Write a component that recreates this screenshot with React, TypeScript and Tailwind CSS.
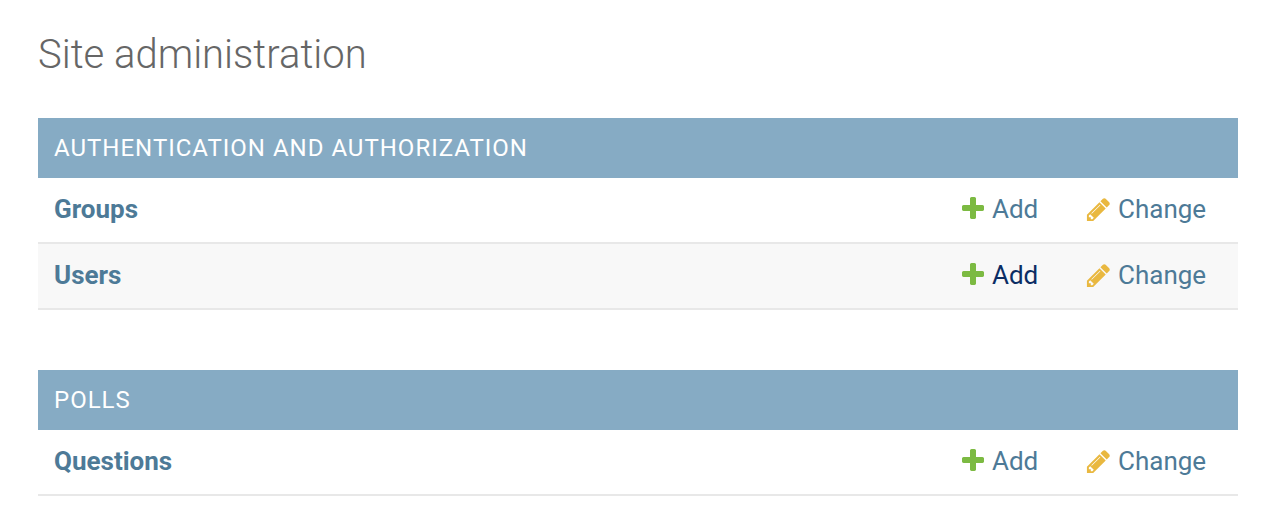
const sections = [
  { title: 'Authentication and Authorization', rows: ['Groups', 'Users'] },
  { title: 'Polls', rows: ['Questions'] },
]

function PlusIcon() {
  return (
    <svg className="w-[28px] h-[28px] mr-[5px] shrink-0" viewBox="0 0 1792 1792" fill="#7cba42">
      <path d="M1600 736v192q0 40-28 68t-68 28h-416v416q0 40-28 68t-68 28h-192q-40 0-68-28t-28-68v-416h-416q-40 0-68-28t-28-68v-192q0-40 28-68t68-28h416v-416q0-40 28-68t68-28h192q40 0 68 28t28 68v416h416q40 0 68 28t28 68z" />
    </svg>
  )
}

function PencilIcon() {
  return (
    <svg className="w-[27px] h-[27px] mr-[6px] shrink-0" viewBox="0 0 1792 1792" fill="#e9b840">
      <path d="M491 1536l91-91-235-235-91 91v107h128v128h107zm523-928q0-22-22-22-10 0-17 7l-542 542q-7 7-7 17 0 22 22 22 10 0 17-7l542-542q7-7 7-17zm-54-192l416 416-832 832h-416v-416zm683 96q0 53-37 90l-166 166-416-416 166-165q36-38 90-38 53 0 91 38l235 234q37 39 37 91z" />
    </svg>
  )
}

function Row({ name, alt, hoverAdd }: { name: string; alt: boolean; hoverAdd: boolean }) {
  return (
    <div className={`flex items-center h-[66px] pl-[16px] pb-[2px] border-b-2 border-[#e8e8e8] ${alt ? 'bg-[#f8f8f8]' : 'bg-white'}`}>
      <a className="flex-1 text-[26px] font-bold text-[#4d7a97]">{name}</a>
      <a className={`flex items-center w-[126px] text-[26px] ${hoverAdd ? 'text-[#0b2d64]' : 'text-[#4d7a97]'}`}>
        <PlusIcon />
        Add
      </a>
      <a className="flex items-center w-[153px] text-[26px] text-[#4d7a97]">
        <PencilIcon />
        Change
      </a>
    </div>
  )
}

export default function App() {
  return (
    <div className="h-[522px] overflow-hidden bg-white pl-[38px] pr-[26px] font-['Roboto',sans-serif]">
      <h1 className="pt-[29px] h-[118px] text-[40px] leading-[52px] font-light text-[#666666]">
        Site administration
      </h1>
      {sections.map((section) => (
        <div key={section.title} className="mb-[60px]">
          <div className="flex items-center h-[60px] px-[16px] bg-[#86abc4] text-[24px] tracking-[1px] uppercase text-white">
            {section.title}
          </div>
          {section.rows.map((name, i) => (
            <Row key={name} name={name} alt={i % 2 === 1} hoverAdd={name === 'Users'} />
          ))}
        </div>
      ))}
    </div>
  )
}
